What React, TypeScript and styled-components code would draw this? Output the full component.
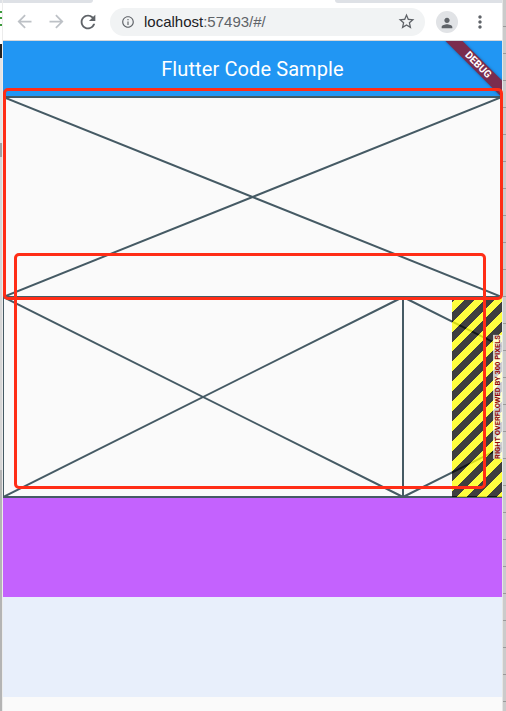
import React from 'react';
import styled, { createGlobalStyle } from 'styled-components';
import { MdArrowBack, MdArrowForward, MdRefresh, MdInfoOutline, MdStarBorder, MdPerson, MdMoreVert } from 'react-icons/md';

const GlobalStyle = createGlobalStyle`
  html, body {
    margin: 0;
    padding: 0;
    background: #fafafa;
  }
`;

const Placeholder = ({ w, h }: { w: number; h: number }) => (
  <PlaceholderBox $w={w} $h={h}>
    <svg width={w} height={h} viewBox={`0 0 ${w} ${h}`}>
      <rect x={0} y={0} width={w} height={h} fill="none" stroke="#455a64" strokeWidth={2} />
      <line x1={0} y1={0} x2={w} y2={h} stroke="#455a64" strokeWidth={2} />
      <line x1={0} y1={h} x2={w} y2={0} stroke="#455a64" strokeWidth={2} />
    </svg>
  </PlaceholderBox>
);

const App = () => {
  return (
    <Screen>
      <GlobalStyle />
      <DesktopEdge />
      <Window>
        <TabStrip>
          <OtherTab $side="left" />
          <ActiveTab />
          <OtherTab $side="right" />
        </TabStrip>
        <Toolbar>
          <NavButton $dim><MdArrowBack size={21} /></NavButton>
          <NavButton $dim><MdArrowForward size={21} /></NavButton>
          <NavButton><MdRefresh size={22} /></NavButton>
          <Omnibox>
            <MdInfoOutline size={14} color="#5f6368" />
            <Url>localhost<span>:57493/#/</span></Url>
            <StarWrap><MdStarBorder size={19} /></StarWrap>
          </Omnibox>
          <Avatar><MdPerson size={16} /></Avatar>
          <MenuDots><MdMoreVert size={20} /></MenuDots>
        </Toolbar>
        <FlutterApp>
          <AppBar>
            <Title>Flutter Code Sample</Title>
          </AppBar>
          <Body>
            <Placeholder w={499} h={200} />
            <OverflowRow>
              <Placeholder w={400} h={200} />
              <Placeholder w={400} h={200} />
              <Stripes />
              <LabelRail>
                <OverflowLabel>RIGHT OVERFLOWED BY 300 PIXELS</OverflowLabel>
              </LabelRail>
            </OverflowRow>
            <ColorBlock $color="#c462fe" />
            <ColorBlock $color="#e8effb" />
          </Body>
          <DebugBanner>DEBUG</DebugBanner>
        </FlutterApp>
      </Window>
      <ScrollEdge />
      <Annotation $left={3} $top={88} $w={500} $h={212} />
      <Annotation $left={14} $top={253} $w={472} $h={236} />
    </Screen>
  );
};

export default App;

const Screen = styled.div`
  position: relative;
  width: 506px;
  height: 711px;
  display: flex;
  overflow: hidden;
  background: #fafafa;
`;

const DesktopEdge = styled.div`
  width: 3px;
  flex-shrink: 0;
  box-shadow: inset -1px 0 #ececec;
  background: linear-gradient(
    to bottom,
    #dee1e6 0 3px,
    #ffffff 3px 11px,
    #3c9a3c 11px 13px,
    #ffffff 13px 17px,
    #3c9a3c 17px 19px,
    #ffffff 19px 24px,
    #3c9a3c 24px 26px,
    #ffffff 26px 44px,
    #222222 44px 58px,
    #e4e4e4 58px 143px,
    #a0a0a0 143px 157px,
    #d6d6d6 157px 470px,
    #b4b4b4 470px
  );
`;

const ScrollEdge = styled.div`
  width: 4px;
  flex-shrink: 0;
  border-left: 1px solid #e6e6e6;
  background: repeating-linear-gradient(to bottom, #cbcbcb 0 26px, #9a9a9a 26px 27px);
`;

const Window = styled.div`
  width: 499px;
  flex-shrink: 0;
  display: flex;
  flex-direction: column;
`;

const TabStrip = styled.div`
  height: 3px;
  display: flex;
  background: #ffffff;
`;

const OtherTab = styled.div<{ $side: 'left' | 'right' }>`
  background: #dee1e6;
  width: ${({ $side }) => ($side === 'left' ? '90px' : 'auto')};
  flex: ${({ $side }) => ($side === 'left' ? '0 0 90px' : '1')};
  border-radius: ${({ $side }) => ($side === 'left' ? '0 0 3px 0' : '0 0 0 3px')};
`;

const ActiveTab = styled.div`
  width: 242px;
  background: #ffffff;
`;

const Toolbar = styled.div`
  height: 37px;
  display: flex;
  align-items: center;
  padding-left: 5px;
  background: #ffffff;
  border-bottom: 1px solid #d5d7da;
  font-family: "Liberation Sans", Arial, sans-serif;
`;

const NavButton = styled.div<{ $dim?: boolean }>`
  width: 32px;
  height: 28px;
  display: flex;
  align-items: center;
  justify-content: center;
  color: ${({ $dim }) => ($dim ? '#bdc1c6' : '#5f6368')};
`;

const Omnibox = styled.div`
  margin-left: 6px;
  width: 315px;
  height: 28px;
  border-radius: 14px;
  background: #f1f3f4;
  display: flex;
  align-items: center;
  padding-left: 11px;
  box-sizing: border-box;
`;

const Url = styled.div`
  margin-left: 9px;
  font-size: 15px;
  color: #202124;
  flex: 1;
  & span {
    color: #5f6368;
  }
`;

const StarWrap = styled.div`
  width: 19px;
  margin-right: 9px;
  display: flex;
  color: #5f6368;
`;

const Avatar = styled.div`
  margin-left: 11px;
  width: 22px;
  height: 22px;
  border-radius: 50%;
  background: #e1e3e6;
  display: flex;
  align-items: flex-end;
  justify-content: center;
  color: #5f6368;
  overflow: hidden;
  & svg {
    margin-bottom: 2px;
  }
`;

const MenuDots = styled.div`
  margin-left: 12px;
  display: flex;
  color: #5f6368;
`;

const FlutterApp = styled.div`
  position: relative;
  flex: 1;
  overflow: hidden;
  background: #fafafa;
  font-family: Roboto, "Noto Sans", sans-serif;
`;

const AppBar = styled.div`
  height: 56px;
  background: #2196f3;
  display: flex;
  align-items: center;
  justify-content: center;
`;

const Title = styled.div`
  color: #ffffff;
  font-size: 20px;
  font-weight: 400;
  letter-spacing: 0.1px;
`;

const Body = styled.div`
  display: flex;
  flex-direction: column;
`;

const PlaceholderBox = styled.div<{ $w: number; $h: number }>`
  width: ${({ $w }) => $w}px;
  height: ${({ $h }) => $h}px;
  flex-shrink: 0;
  & svg {
    display: block;
    overflow: visible;
  }
`;

const OverflowRow = styled.div`
  position: relative;
  display: flex;
  height: 200px;
`;

const Stripes = styled.div`
  position: absolute;
  top: 0;
  right: 0;
  width: 50px;
  height: 100%;
  background: repeating-linear-gradient(
    135deg,
    rgba(0, 0, 0, 0.75) 0 3.54px,
    rgba(255, 255, 0, 0.75) 3.54px 10.61px,
    rgba(0, 0, 0, 0.75) 10.61px 14.14px
  );
`;

const LabelRail = styled.div`
  position: absolute;
  top: 0;
  bottom: 0;
  right: 0;
  display: flex;
  align-items: center;
`;

const OverflowLabel = styled.div`
  writing-mode: vertical-rl;
  transform: rotate(180deg);
  font-size: 7.5px;
  line-height: 9px;
  font-weight: 700;
  color: #900000;
  background: rgba(255, 255, 255, 0.75);
  white-space: nowrap;
`;

const ColorBlock = styled.div<{ $color: string }>`
  height: 100px;
  background: ${({ $color }) => $color};
`;

const DebugBanner = styled.div`
  position: absolute;
  top: 18px;
  right: -16px;
  width: 80px;
  height: 12px;
  transform: rotate(45deg);
  background: #7a2d4e;
  box-shadow: 0 0 3px rgba(0, 0, 0, 0.35);
  color: #ffffff;
  font-size: 10.2px;
  font-weight: 700;
  line-height: 12px;
  text-align: center;
`;

const Annotation = styled.div<{ $left: number; $top: number; $w: number; $h: number }>`
  position: absolute;
  left: ${({ $left }) => $left}px;
  top: ${({ $top }) => $top}px;
  width: ${({ $w }) => $w}px;
  height: ${({ $h }) => $h}px;
  box-sizing: border-box;
  border: 3px solid #ff2d16;
  border-radius: 5px;
  pointer-events: none;
`;
